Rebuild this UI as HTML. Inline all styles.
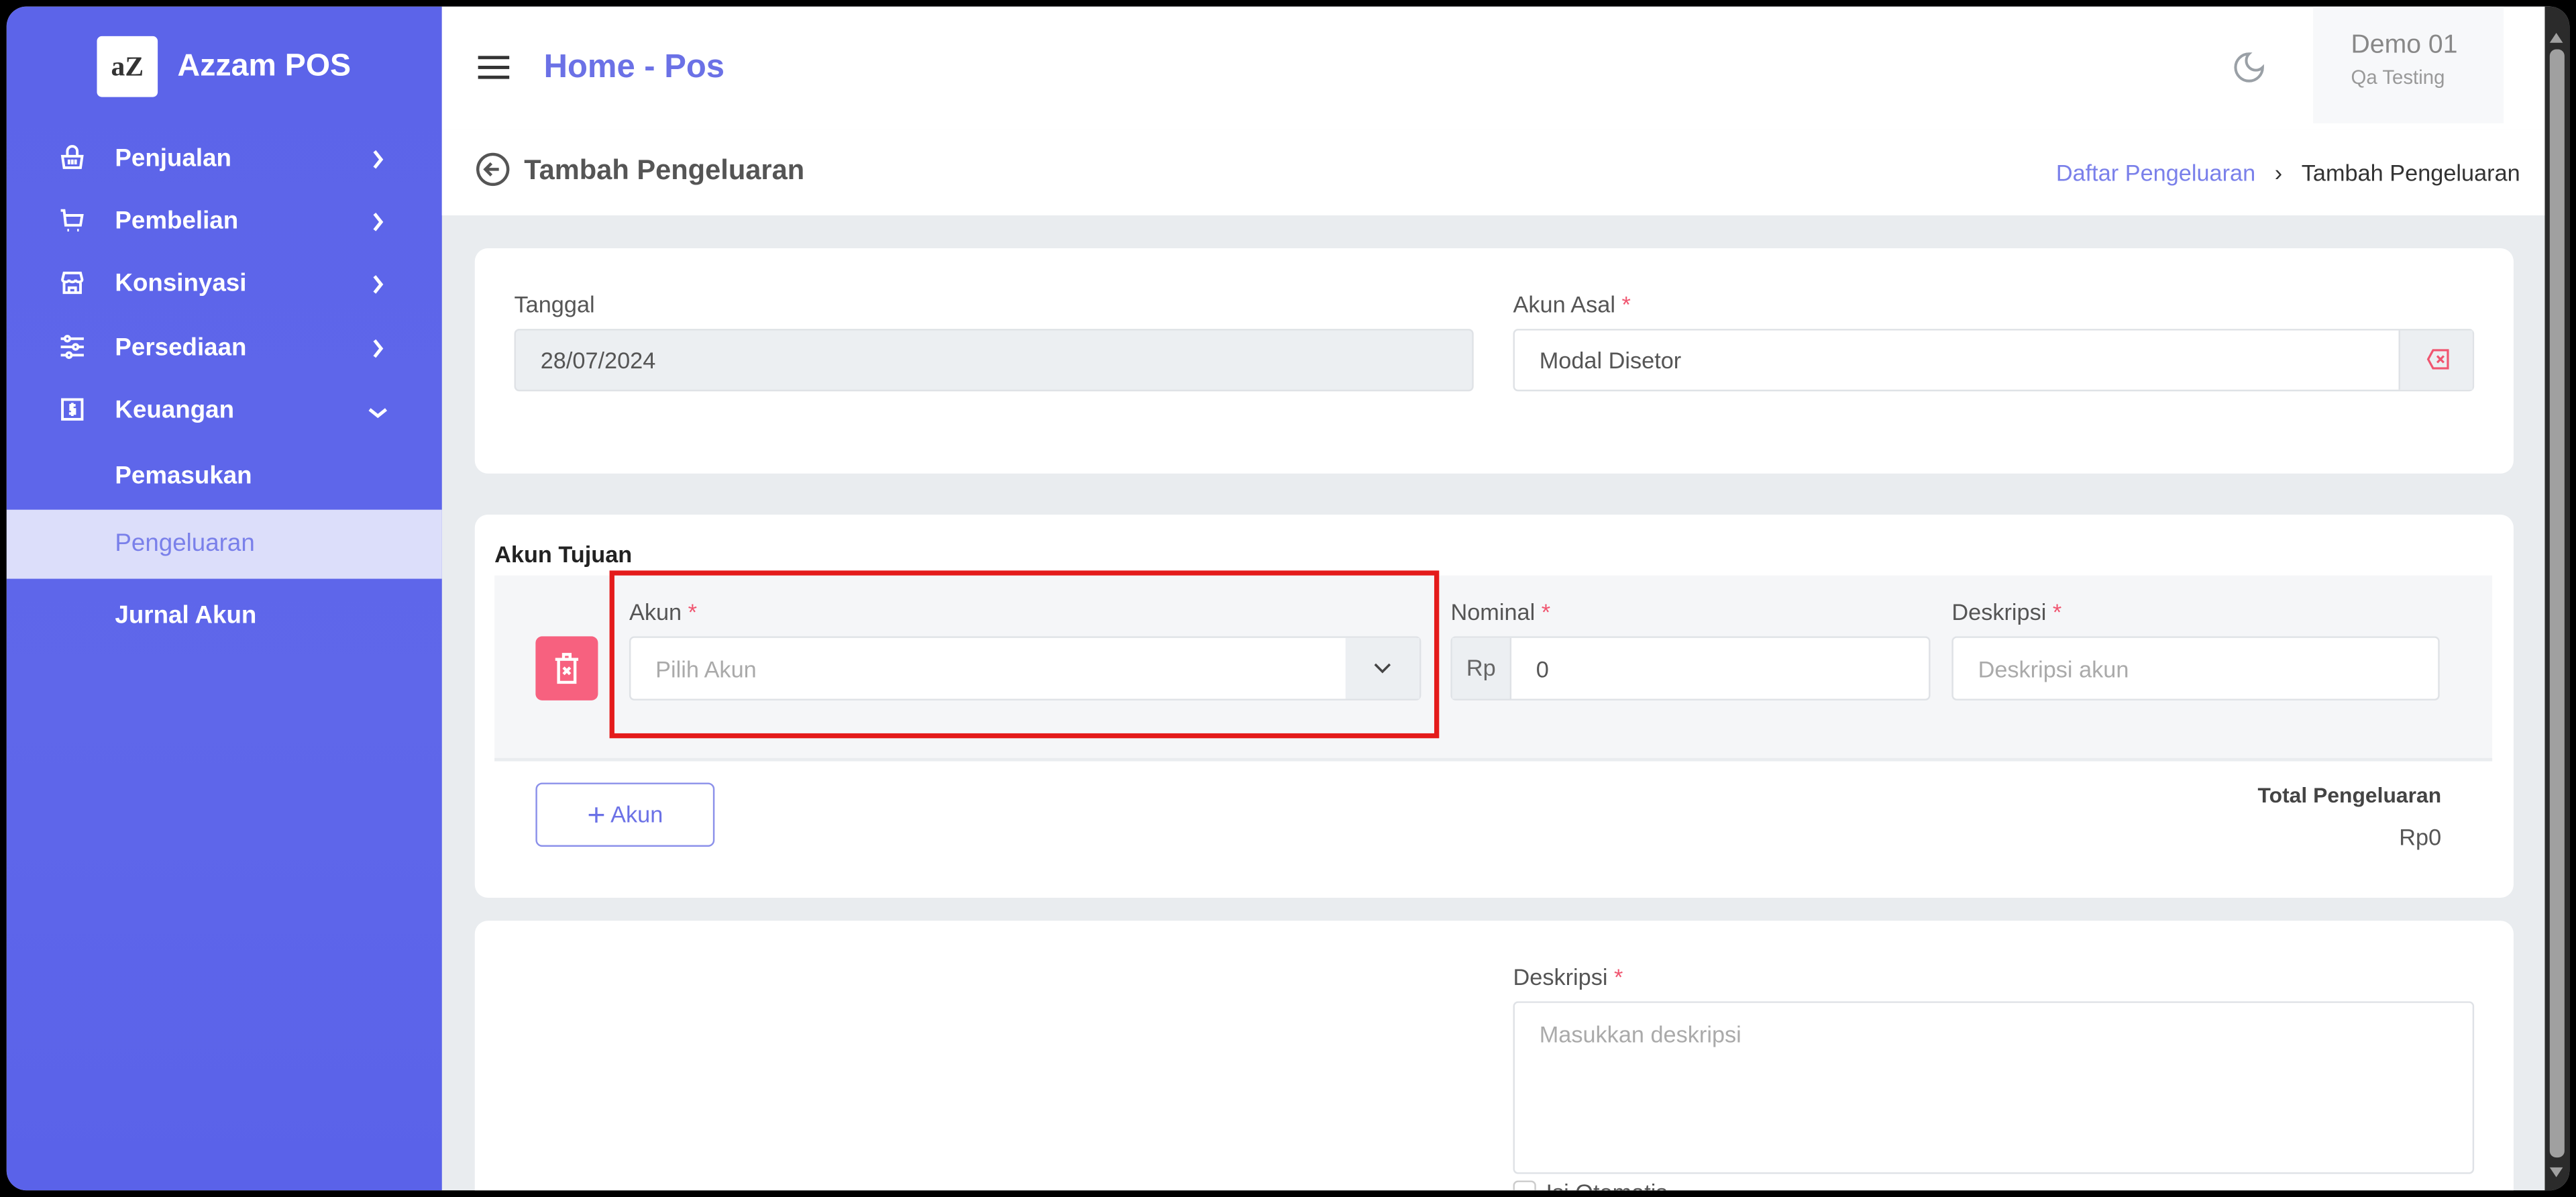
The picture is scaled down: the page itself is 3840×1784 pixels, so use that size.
<!DOCTYPE html>
<html><head><meta charset="utf-8"><style>
*{box-sizing:border-box;margin:0;padding:0}
html,body{width:3840px;height:1784px;overflow:hidden;background:#000}
#s{position:absolute;left:0;top:0;width:1568px;height:728px;transform:scale(2.44898,2.4505);transform-origin:0 0;font-family:"Liberation Sans",sans-serif;background:#000}
.a{position:absolute}
#app{left:4px;top:4px;width:1560px;height:720px;border-radius:12px;overflow:hidden;background:#e9ecef}
#side{left:0;top:0;width:265px;height:720px;background:linear-gradient(180deg,#5c64e9,#5f67ea 60%,#5a62e9)}
.mi{position:absolute;left:66px;color:#fff;font-weight:bold;font-size:15px}
.ic{position:absolute;left:32px;width:16px;height:16px}
.ch{position:absolute;left:222px;width:8px;height:12px}
.lbl{position:absolute;font-size:14px;color:#555}
.st{color:#f05570}
.inp{position:absolute;border:1px solid #dfe2e6;border-radius:3px;background:#fff;font-size:14px;color:#555;padding-left:15px;display:flex;align-items:center}
.card{position:absolute;background:#fff;border-radius:8px}
</style></head><body><div id="s">
<div id="app" class="a">
 <div id="side" class="a">
  <div class="a" style="left:55px;top:18px;width:37px;height:37px;background:#fff;border-radius:3px;font-family:'Liberation Serif',serif;font-weight:bold;font-size:17px;color:#333;text-align:center;line-height:37px">aZ</div>
  <div class="a" style="left:104px;top:26px;color:#fff;font-size:19px;font-weight:bold">Azzam POS</div>
  <svg class="ic" style="top:84px" viewBox="0 0 16 16" fill="none" stroke="#fff" stroke-width="1.6"><path d="M2 7h12l-1 7H3z M5 7V4a3 3 0 0 1 6 0v3 M6 9v3 M8 9v3 M10 9v3"/></svg>
  <div class="mi" style="top:84px">Penjualan</div><svg class="ch" style="top:87px" viewBox="0 0 8 12" fill="none" stroke="#fff" stroke-width="2"><path d="M2 1l4 5-4 5"/></svg>
  <svg class="ic" style="top:122px" viewBox="0 0 16 16" fill="none" stroke="#fff" stroke-width="1.6"><path d="M1 2h2l1 9h9l1-6H4 M5 14h1 M11 14h1"/></svg>
  <div class="mi" style="top:122px">Pembelian</div><svg class="ch" style="top:125px" viewBox="0 0 8 12" fill="none" stroke="#fff" stroke-width="2"><path d="M2 1l4 5-4 5"/></svg>
  <svg class="ic" style="top:160px" viewBox="0 0 16 16" fill="none" stroke="#fff" stroke-width="1.6"><path d="M2 6l1-4h10l1 4c0 2-4 2-4 0 0 2-4 2-4 0 0 2-4 2-4 0z M3 8v6h10V8 M6 14v-3h4v3"/></svg>
  <div class="mi" style="top:160px">Konsinyasi</div><svg class="ch" style="top:163px" viewBox="0 0 8 12" fill="none" stroke="#fff" stroke-width="2"><path d="M2 1l4 5-4 5"/></svg>
  <svg class="ic" style="top:199px" viewBox="0 0 16 16" fill="none" stroke="#fff" stroke-width="1.6"><path d="M1 3h14 M1 8h14 M1 13h14"/><circle cx="5" cy="3" r="1.5" fill="#5d65e9"/><circle cx="10" cy="8" r="1.5" fill="#5d65e9"/><circle cx="6" cy="13" r="1.5" fill="#5d65e9"/></svg>
  <div class="mi" style="top:199px">Persediaan</div><svg class="ch" style="top:202px" viewBox="0 0 8 12" fill="none" stroke="#fff" stroke-width="2"><path d="M2 1l4 5-4 5"/></svg>
  <svg class="ic" style="top:237px" viewBox="0 0 16 16" fill="none" stroke="#fff" stroke-width="1.6"><rect x="2" y="2" width="12" height="12"/><path d="M10 5.5H7v2.5h2.5v2.5H6 M8 4v8"/></svg>
  <div class="mi" style="top:237px">Keuangan</div><svg class="a" style="left:220px;top:243px" width="12" height="8" viewBox="0 0 12 8" fill="none" stroke="#fff" stroke-width="2"><path d="M1 2l5 4 5-4"/></svg>
  <div class="mi" style="top:277px">Pemasukan</div>
  <div class="a" style="left:0;top:306px;width:265px;height:42px;background:#dcdefa"></div>
  <div class="mi" style="top:318px;color:#7a80ea;font-weight:normal">Pengeluaran</div>
  <div class="mi" style="top:362px">Jurnal Akun</div>
 </div>
 <div class="a" style="left:265px;top:0;width:1283px;height:75px;background:#fff">
  <div class="a" style="left:22px;top:30px;width:19px;height:2px;background:#333;box-shadow:0 6px 0 #333,0 12px 0 #333"></div>
  <div class="a" style="left:62px;top:26px;font-size:20px;font-weight:bold;color:#6b71e6">Home - Pos</div>
  <svg class="a" style="left:1089px;top:26px" width="22" height="22" viewBox="0 0 24 24" fill="none" stroke="#9aa0a6" stroke-width="1.8"><path d="M12 3a6 6 0 0 0 9 9 9 9 0 1 1-9-9z"/></svg>
  <div class="a" style="left:1139px;top:0;width:116px;height:71px;background:#f7f8fa">
   <div class="a" style="left:23px;top:15px;font-size:16px;color:#888">Demo 01</div>
   <div class="a" style="left:23px;top:36px;font-size:12px;color:#999">Qa Testing</div>
  </div>
 </div>
 <div class="a" style="left:265px;top:75px;width:1283px;height:52px;background:#fff">
  <svg class="a" style="left:20px;top:13px" width="22" height="22" viewBox="0 0 24 24" fill="none" stroke="#555" stroke-width="2"><circle cx="12" cy="12" r="10"/><path d="M16 12H8 M11 8l-4 4 4 4"/></svg>
  <div class="a" style="left:50px;top:15px;font-size:17px;font-weight:bold;color:#555">Tambah Pengeluaran</div>
  <div class="a" style="right:18px;top:18px;font-size:14px;color:#333"><span style="color:#7a80ea">Daftar Pengeluaran</span>&nbsp;&nbsp; › &nbsp;&nbsp;Tambah Pengeluaran</div>
 </div>
 <div class="card" style="left:285px;top:147px;width:1241px;height:137px">
  <div class="lbl" style="left:24px;top:26px">Tanggal</div>
  <div class="inp" style="left:24px;top:49px;width:584px;height:38px;background:#eceff2">28/07/2024</div>
  <div class="lbl" style="left:632px;top:26px">Akun Asal <span class="st">*</span></div>
  <div class="inp" style="left:632px;top:49px;width:585px;height:38px">Modal Disetor
   <div class="a" style="right:0;top:0;width:45px;height:36px;background:#eceff2;border-left:1px solid #dfe2e6"><svg class="a" style="left:16px;top:11px" width="14" height="13" viewBox="0 0 14 13" fill="none" stroke="#f05570" stroke-width="1.3"><path d="M4 1h9v11H4L1 6.5z M6.5 4.5l4 4 M10.5 4.5l-4 4"/></svg></div></div>
 </div>
 <div class="card" style="left:285px;top:309px;width:1241px;height:233px">
  <div class="a" style="left:12px;top:16px;font-size:14px;font-weight:bold;color:#222">Akun Tujuan</div>
  <div class="a" style="left:12px;top:37px;width:1216px;height:113px;background:#f5f6f8;border-bottom:2px solid #e9ecef"></div>
  <div class="a" style="left:37px;top:74px;width:38px;height:39px;background:#f7617f;border-radius:4px"><svg class="a" style="left:11px;top:10px" width="16" height="19" viewBox="0 0 16 19" fill="none" stroke="#fff" stroke-width="1.8"><path d="M1 4h14 M6 4V1h4v3 M3 4v14h10V4 M6 9l4 4 M10 9l-4 4"/></svg></div>
  <div class="lbl" style="left:94px;top:51px">Akun <span class="st">*</span></div>
  <div class="inp" style="left:94px;top:74px;width:482px;height:39px;color:#aaa">Pilih Akun
   <div class="a" style="right:0;top:0;width:45px;height:37px;background:#eceff2"><svg class="a" style="left:17px;top:15px" width="11" height="7" viewBox="0 0 11 7" fill="none" stroke="#444" stroke-width="1.4"><path d="M1 1l4.5 4.5L10 1"/></svg></div></div>
  <div class="a" style="left:82px;top:34px;width:505px;height:102px;border:3px solid #e41b1b"></div>
  <div class="lbl" style="left:594px;top:51px">Nominal <span class="st">*</span></div>
  <div class="inp" style="left:594px;top:74px;width:292px;height:39px;padding-left:0">
   <div style="width:36px;height:37px;background:#eceff2;border-right:1px solid #dfe2e6;text-align:center;line-height:37px;color:#666">Rp</div><span style="margin-left:15px">0</span></div>
  <div class="lbl" style="left:899px;top:51px">Deskripsi <span class="st">*</span></div>
  <div class="inp" style="left:899px;top:74px;width:297px;height:39px;color:#aaa">Deskripsi akun</div>
  <div class="a" style="left:37px;top:163px;width:109px;height:39px;border:1px solid #8c91ea;border-radius:4px;color:#6b71e6;font-size:14px;text-align:center;line-height:37px"><span style="font-size:19px;vertical-align:-2px">+</span> Akun</div>
  <div class="a" style="right:44px;top:163px;font-size:13px;font-weight:bold;color:#444">Total Pengeluaran</div>
  <div class="a" style="right:44px;top:188px;font-size:14px;color:#555">Rp0</div>
 </div>
 <div class="card" style="left:285px;top:556px;width:1241px;height:200px">
  <div class="lbl" style="left:632px;top:26px">Deskripsi <span class="st">*</span></div>
  <div class="inp" style="left:632px;top:49px;width:585px;height:105px;align-items:flex-start;padding-top:11px;color:#aaa">Masukkan deskripsi</div>
  <div class="a" style="left:632px;top:158px;width:14px;height:14px;border:1px solid #ccc;border-radius:3px"></div>
  <div class="lbl" style="left:652px;top:157px">Isi Otomatis</div>
 </div>
 <div class="a" style="left:1545px;top:0;width:15px;height:720px;background:#2b2b2b">
  <div class="a" style="left:3px;top:16px;width:0;height:0;border-left:4.5px solid transparent;border-right:4.5px solid transparent;border-bottom:6px solid #a0a0a0"></div>
  <div class="a" style="left:3px;top:26px;width:9px;height:674px;background:#a0a0a0;border-radius:4px"></div>
  <div class="a" style="left:3px;top:706px;width:0;height:0;border-left:4.5px solid transparent;border-right:4.5px solid transparent;border-top:6px solid #a0a0a0"></div>
 </div>
</div>
</div></body></html>
